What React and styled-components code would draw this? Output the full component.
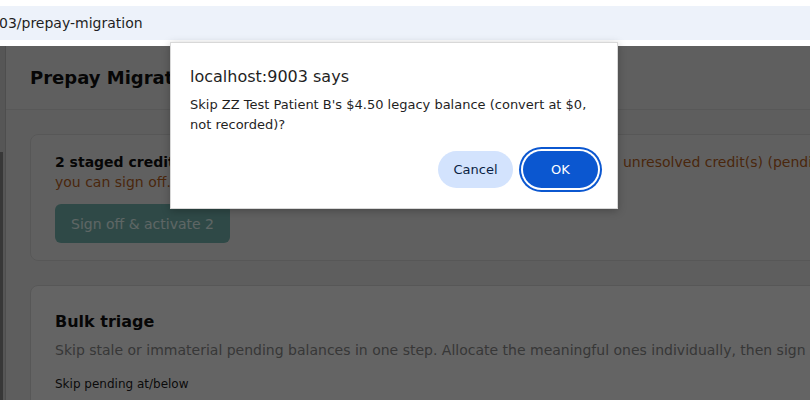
import styled, { createGlobalStyle } from "styled-components";

const GlobalStyle = createGlobalStyle`
  html, body {
    margin: 0;
    padding: 0;
    width: 810px;
    height: 400px;
    overflow: hidden;
    background: #ffffff;
    font-family: "DejaVu Sans", "Noto Sans", sans-serif;
  }
`;

const Screen = styled.div`
  position: relative;
  width: 810px;
  height: 400px;
  overflow: hidden;
  display: flex;
  flex-direction: column;
`;

const Chrome = styled.div`
  padding: 6px 0;
  background: #ffffff;
  flex-shrink: 0;
`;

const UrlBar = styled.div`
  height: 34px;
  display: flex;
  align-items: center;
  background: #edf2fa;
  color: #1f1f1f;
  font-size: 14px;
  white-space: nowrap;
  span {
    margin-left: -1px;
  }
`;

const Viewport = styled.div`
  position: relative;
  flex: 1;
  display: flex;
  overflow: hidden;
`;

const Backdrop = styled.div`
  position: absolute;
  inset: 0;
  background: rgba(0, 0, 0, 0.6);
`;

const SidePane = styled.div`
  width: 5px;
  flex-shrink: 0;
  background: #d6d6d6;
  border-right: 1px solid #c4c4c4;
  display: flex;
  flex-direction: column;
  padding-top: 106px;
`;

const Thumb = styled.div`
  width: 3px;
  flex: 1;
  background: #8c8c8c;
`;

const Main = styled.div`
  width: 1200px;
  flex-shrink: 0;
  background: #ececec;
`;

const Header = styled.header`
  height: 63px;
  display: flex;
  align-items: center;
  padding: 0 24px;
  background: #eeeeee;
  border-bottom: 1px solid #dcdcdc;
  h1 {
    margin: 0;
    font-size: 18px;
    font-weight: 700;
    color: #111111;
  }
`;

const Content = styled.div`
  padding: 24px;
  display: flex;
  flex-direction: column;
  gap: 24px;
`;

const Card = styled.section`
  border: 1px solid #dadada;
  border-radius: 8px;
  background: ${(p) => (p.$tint ? "#f1f1f1" : "#fbfbfb")};
  padding: ${(p) => (p.$tight ? "17px 24px 17px" : "24px")};
`;

const Status = styled.p`
  margin: 0;
  font-size: 14px;
  line-height: 20px;
  color: #111111;
  strong {
    font-weight: 700;
  }
`;

const Warn = styled.span`
  color: #b9621e;
`;

const PrimaryButton = styled.button`
  margin-top: 12px;
  height: 39px;
  padding: 0 16px;
  border: none;
  border-radius: 6px;
  background: #76b7b1;
  color: #eafffc;
  font-family: inherit;
  font-size: 14px;
`;

const CardTitle = styled.h2`
  margin: 0;
  font-size: 16px;
  line-height: 24px;
  font-weight: 700;
  color: #111111;
`;

const Muted = styled.p`
  margin: 6px 0 0;
  font-size: 14px;
  line-height: 20px;
  color: #8a8a8a;
  white-space: nowrap;
`;

const FieldLabel = styled.label`
  display: block;
  margin-top: 16px;
  font-size: 12px;
  line-height: 16px;
  color: #1c1c1c;
`;

const Dialog = styled.div`
  position: absolute;
  left: 170px;
  top: 42px;
  width: 408px;
  padding: 24px 19px 20px;
  background: #ffffff;
  border: 1px solid #d8d8d8;
  box-shadow: 0 2px 8px rgba(0, 0, 0, 0.25);
  color: #1f1f1f;
`;

const DialogTitle = styled.div`
  font-size: 16px;
  line-height: 20px;
`;

const DialogText = styled.div`
  margin-top: 8px;
  font-size: 13px;
  line-height: 20px;
`;

const Actions = styled.div`
  display: flex;
  justify-content: flex-end;
  gap: 10px;
  margin-top: 16px;
`;

const DialogButton = styled.button`
  width: 75px;
  height: 37px;
  border: none;
  border-radius: 19px;
  font-family: inherit;
  font-size: 13px;
  background: ${(p) => (p.$primary ? "#0b57d0" : "#d3e3fd")};
  color: ${(p) => (p.$primary ? "#ffffff" : "#0a1f44")};
  box-shadow: ${(p) =>
    p.$primary ? "0 0 0 2px #ffffff, 0 0 0 4px #0b57d0" : "none"};
`;

export default function App() {
  return (
    <>
      <GlobalStyle />
      <Screen>
        <Chrome>
          <UrlBar>
            <span>03/prepay-migration</span>
          </UrlBar>
        </Chrome>
        <Viewport>
          <SidePane>
            <Thumb />
          </SidePane>
          <Main>
            <Header>
              <h1>Prepay Migration</h1>
            </Header>
            <Content>
              <Card $tint $tight>
                <Status>
                  <strong>2 staged credits ready to activate.</strong>{" "}
                  <Warn>
                    Please resolve or skip the remaining 120 unresolved
                    credit(s) (pending review) before
                    <br />
                    you can sign off.
                  </Warn>
                </Status>
                <PrimaryButton disabled>Sign off &amp; activate 2</PrimaryButton>
              </Card>
              <Card>
                <CardTitle>Bulk triage</CardTitle>
                <Muted>
                  Skip stale or immaterial pending balances in one step.
                  Allocate the meaningful ones individually, then sign off.
                </Muted>
                <FieldLabel>Skip pending at/below</FieldLabel>
              </Card>
            </Content>
          </Main>
          <Backdrop />
        </Viewport>
        <Dialog role="alertdialog">
          <DialogTitle>localhost:9003 says</DialogTitle>
          <DialogText>
            Skip ZZ Test Patient B's $4.50 legacy balance (convert at $0, not
            recorded)?
          </DialogText>
          <Actions>
            <DialogButton>Cancel</DialogButton>
            <DialogButton $primary>OK</DialogButton>
          </Actions>
        </Dialog>
      </Screen>
    </>
  );
}
